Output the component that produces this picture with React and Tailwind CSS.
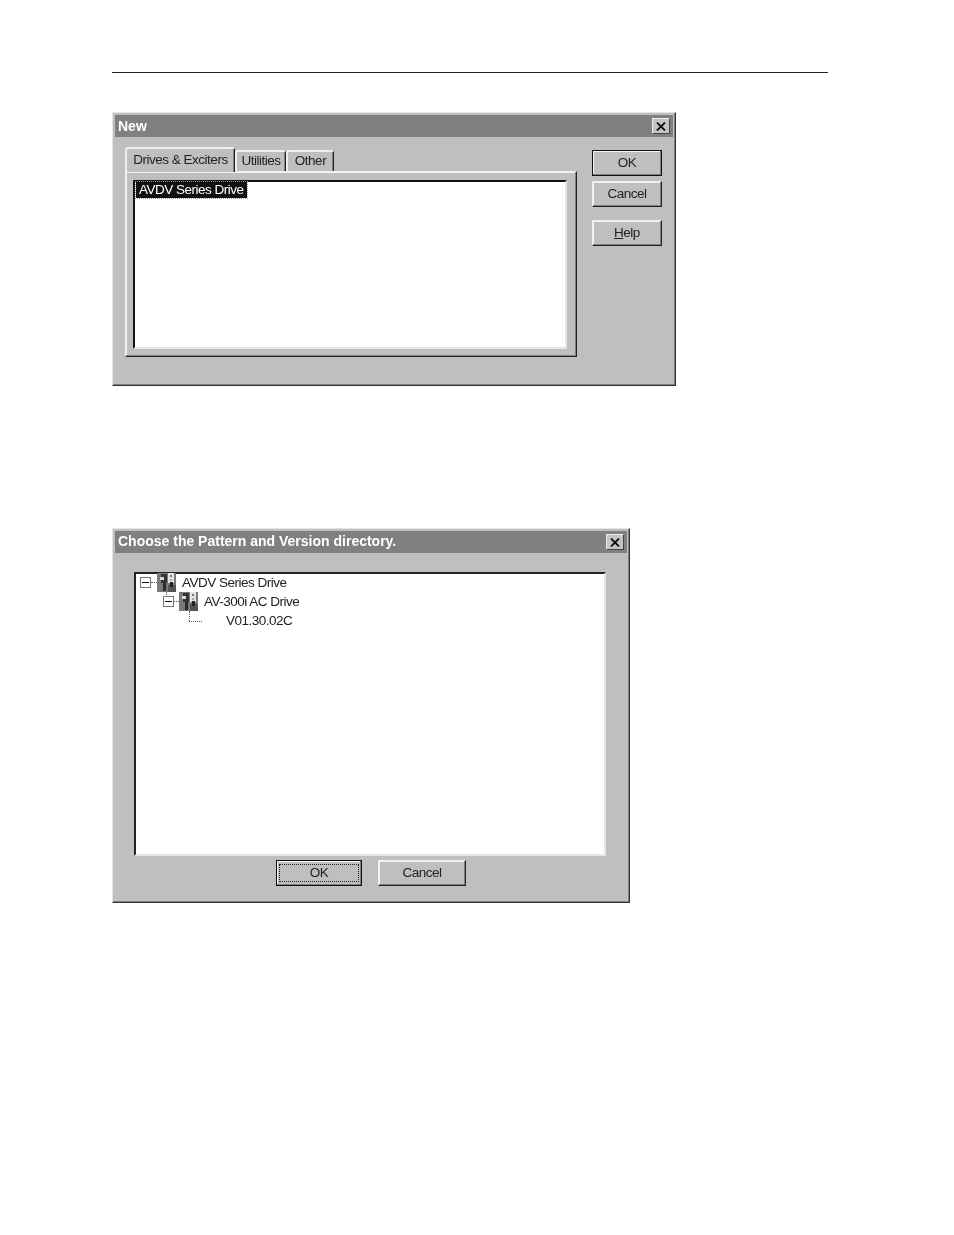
import React from 'react';

const font = { fontFamily: '"Liberation Sans", Arial, sans-serif' };

const CloseBox = () => (
  <div className="w-[18px] h-[16px] bg-[#c4c4c4] border border-t-[#eeeeee] border-l-[#eeeeee] border-r-[#444444] border-b-[#444444] flex items-center justify-center">
    <svg width="10" height="9" viewBox="0 0 10 9">
      <path d="M1 0.5 L9 8.5 M9 0.5 L1 8.5" stroke="#111" strokeWidth="1.8" />
    </svg>
  </div>
);

const Btn = ({ w, mt, isDefault, focus, children }) => (
  <div
    className={`h-[26px] bg-[#bfbfbf] flex items-center justify-center text-[13.5px] tracking-[-0.5px] text-[#222] border border-t-[#eeeeee] border-l-[#eeeeee] border-r-[#222] border-b-[#222] shadow-[inset_-1px_-1px_0_#808080,inset_1px_1px_0_#f4f4f4] ${
      isDefault ? 'outline outline-1 -outline-offset-1 outline-[#111]' : ''
    }`}
    style={{ width: w, marginTop: mt }}
  >
    {focus ? (
      <div className="w-[80px] h-[18px] border border-dotted border-[#222] flex items-center justify-center">{children}</div>
    ) : (
      children
    )}
  </div>
);

const Tab = ({ active, w, children }) => (
  <div
    className={`bg-[#bfbfbf] border-t-2 border-l-2 border-t-[#eeeeee] border-l-[#eeeeee] border-r border-r-[#222] shadow-[inset_-1px_0_0_#808080] rounded-t-[3px] flex items-center justify-center whitespace-nowrap text-[13.5px] tracking-[-0.5px] text-[#222] ${
      active ? 'h-[25px] relative z-10 -mb-px pb-px' : 'h-[21px]'
    }`}
    style={{ width: w }}
  >
    {children}
  </div>
);

const Minus = () => (
  <div className="w-[11px] h-[11px] bg-white border border-[#777] flex items-center justify-center shrink-0">
    <div className="w-[7px] h-px bg-[#111]" />
  </div>
);

// the little drive cabinet drawn next to each tree node
const DriveIcon = () => (
  <svg width="19" height="19" viewBox="0 0 19 19" className="shrink-0">
    <rect x="0" y="0" width="19" height="19" fill="#7a7a7a" />
    <rect x="11" y="0" width="6" height="10" fill="#e4e4e4" />
    <rect x="13" y="2" width="2" height="2" fill="#777" />
    <rect x="13" y="6" width="2" height="2" fill="#aaa" />
    <rect x="4" y="1" width="6" height="9" fill="#333" />
    <rect x="3" y="4" width="4" height="3" fill="#d8d8d8" />
    <rect x="6" y="10" width="3" height="8" fill="#2a2a2a" />
    <rect x="11" y="12" width="8" height="7" fill="#555" />
    <rect x="13" y="9" width="3" height="5" fill="#222" />
  </svg>
);

const Dots = ({ w }) => <div className="border-t border-dotted border-[#555]" style={{ width: w }} />;

export default function App() {
  return (
    <div className="w-[954px] h-[1235px] bg-white pt-[72px] pl-[112px] overflow-hidden" style={font}>
      <div className="w-[716px] h-px bg-[#222]" />

      {/* New dialog */}
      <div className="blur-[0.4px] mt-[39px] w-[564px] h-[274px] bg-[#bfbfbf] border border-t-[#e4e4e4] border-l-[#e4e4e4] border-r-[#333] border-b-[#333] shadow-[inset_-1px_-1px_0_#808080] p-[2px]">
        <div className="h-[22px] bg-[#808080] flex items-center justify-between pl-[3px] pr-[3px]">
          <span className="text-[14px] font-bold text-white">New</span>
          <CloseBox />
        </div>
        <div className="flex pl-[10px] pt-[10px]">
          <div className="w-[452px]">
            <div className="flex items-end h-[24px]">
              <Tab active w={110}>Drives &amp; Exciters</Tab>
              <Tab w={51}>Utilities</Tab>
              <Tab w={48}>Other</Tab>
            </div>
            <div className="h-[186px] border border-t-[#eeeeee] border-l-[#eeeeee] border-r-[#222] border-b-[#222] shadow-[inset_-1px_-1px_0_#808080,inset_1px_1px_0_#f4f4f4] pt-[8px] pl-[7px] pr-[9px] pb-[7px]">
              <div className="h-full bg-white border-2 border-t-[#111] border-l-[#111] border-r-[#e6e6e6] border-b-[#e6e6e6] pl-px">
                <div className="w-fit bg-[#111] text-white text-[13.5px] tracking-[-0.5px] leading-[16px] px-[3px] outline outline-1 outline-dotted outline-[#999]">
                  AVDV Series Drive
                </div>
              </div>
            </div>
          </div>
          <div className="ml-[15px] pt-[3px]">
            <Btn w={70} isDefault>OK</Btn>
            <Btn w={70} mt={5}>Cancel</Btn>
            <Btn w={70} mt={13}>
              <span><span className="underline">H</span>elp</span>
            </Btn>
          </div>
        </div>
      </div>

      {/* Pattern and version dialog */}
      <div className="blur-[0.4px] mt-[142px] w-[518px] h-[375px] bg-[#bfbfbf] border border-t-[#e4e4e4] border-l-[#e4e4e4] border-r-[#333] border-b-[#333] shadow-[inset_-1px_-1px_0_#808080] p-[2px]">
        <div className="h-[22px] bg-[#808080] flex items-center justify-between pl-[3px] pr-[3px]">
          <span className="text-[14px] font-bold text-white pb-[2px]">Choose the Pattern and Version directory.</span>
          <CloseBox />
        </div>
        <div className="ml-[19px] mt-[19px] w-[472px] h-[284px] bg-white border-2 border-t-[#222] border-l-[#222] border-r-[#e6e6e6] border-b-[#e6e6e6] pl-[4px] text-[13.5px] tracking-[-0.5px] text-[#222]">
          <div className="h-[19px] -mt-px flex items-center relative">
            <Minus />
            <Dots w={6} />
            <DriveIcon />
            <span className="ml-[6px] pt-[2px]">AVDV Series Drive</span>
            <div className="absolute left-[26px] top-[19px] h-[5px] border-l border-dotted border-[#555]" />
          </div>
          <div className="h-[19px] flex items-center pl-[23px] relative">
            <Minus />
            <Dots w={5} />
            <DriveIcon />
            <span className="ml-[6px] pt-[2px]">AV-300i AC Drive</span>
          </div>
          <div className="h-[19px] flex items-center pl-[86px] relative">
            <div className="absolute left-[49px] top-0 h-[10px] border-l border-dotted border-[#555]" />
            <div className="absolute left-[49px] top-[10px] w-[13px] border-t border-dotted border-[#555]" />
            <span className="pt-[2px]">V01.30.02C</span>
          </div>
        </div>
        <div className="flex pl-[161px] mt-[4px] gap-[16px]">
          <Btn w={86} isDefault focus>OK</Btn>
          <Btn w={88}>Cancel</Btn>
        </div>
      </div>
    </div>
  );
}
